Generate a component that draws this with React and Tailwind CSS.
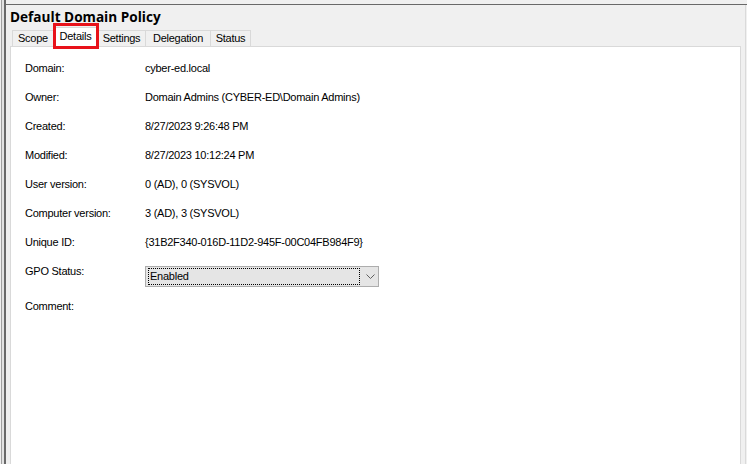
export default function App() {
  const rows = [
    ["Domain:", "cyber-ed.local"],
    ["Owner:", "Domain Admins (CYBER-ED\\Domain Admins)"],
    ["Created:", "8/27/2023 9:26:48 PM"],
    ["Modified:", "8/27/2023 10:12:24 PM"],
    ["User version:", "0 (AD), 0 (SYSVOL)"],
    ["Computer version:", "3 (AD), 3 (SYSVOL)"],
    ["Unique ID:", "{31B2F340-016D-11D2-945F-00C04FB984F9}"],
  ];
  const tabBase =
    "h-[16px] border-t border-r border-[#d9d9d9] bg-[#f0f0f0] flex items-center justify-center leading-none";
  return (
    <div className="w-[747px] h-[464px] bg-[#f0f0f0] flex overflow-hidden font-['Liberation_Sans',Arial,sans-serif] text-[11px] tracking-[-0.25px] text-black">
      <div className="flex h-full shrink-0">
        <div className="w-px bg-[#f0f0f0]" />
        <div className="w-px bg-[#a0a0a0]" />
        <div className="w-[2px] bg-[#e3e3e3]" />
        <div className="w-[2px] bg-[#696969]" />
      </div>
      <div className="flex-1 flex flex-col pt-[4px]">
        <div className="border-t border-[#696969] flex-1 flex">
          <div className="w-[735px] flex flex-col">
            <div className="h-[22px] pl-[4px] pt-[3px]">
              <div className="font-['Open_Sans',sans-serif] font-bold text-[13.6px] tracking-normal leading-[18px]">
                Default Domain Policy
              </div>
            </div>
            <div className="h-[19px] flex items-end pl-[6px]">
              <div className={tabBase + " w-[42px] border-l"}>Scope</div>
              <div className="relative z-10 h-[20px] -mb-px w-[45px] -ml-px border-t border-l border-r border-[#d9d9d9] bg-white flex items-start justify-center pt-[3px] leading-none">
                Details
                <div className="absolute left-[-1px] top-[-5px] w-[46px] h-[26px] border-[3px] border-[#e8121a]" />
              </div>
              <div className={tabBase + " w-[48px]"}>Settings</div>
              <div className={tabBase + " w-[65px]"}>Delegation</div>
              <div className={tabBase + " w-[40px]"}>Status</div>
            </div>
            <div className="ml-[4px] flex-1 bg-white border border-b-0 border-[#d9d9d9] pt-[7px] pl-[14px]">
              {rows.map(([l, v]) => (
                <div key={l} className="h-[29px] flex items-center">
                  <div className="w-[120px]">{l}</div>
                  <div>{v}</div>
                </div>
              ))}
              <div className="h-[35px] flex items-start">
                <div className="w-[120px] h-[29px] flex items-center">GPO Status:</div>
                <div className="mt-[9px] w-[234px] h-[21px] bg-[#e5e5e5] border border-[#adadad] flex items-center pl-[2px]">
                  <div className="w-[212px] h-[17px] border border-dotted border-black flex items-center pl-px leading-none">
                    Enabled
                  </div>
                  <div className="flex-1 flex items-center justify-center pl-[2px]">
                    <svg width="9" height="5" viewBox="0 0 9 5">
                      <path d="M0.5 0.5 L4.5 4.5 L8.5 0.5" fill="none" stroke="#606060" strokeWidth="1" />
                    </svg>
                  </div>
                </div>
              </div>
              <div className="h-[29px] flex items-center">
                <div className="w-[120px]">Comment:</div>
              </div>
            </div>
          </div>
          <div className="w-[4px]" />
          <div className="w-px bg-[#dadada]" />
          <div className="w-px" />
        </div>
      </div>
    </div>
  );
}
